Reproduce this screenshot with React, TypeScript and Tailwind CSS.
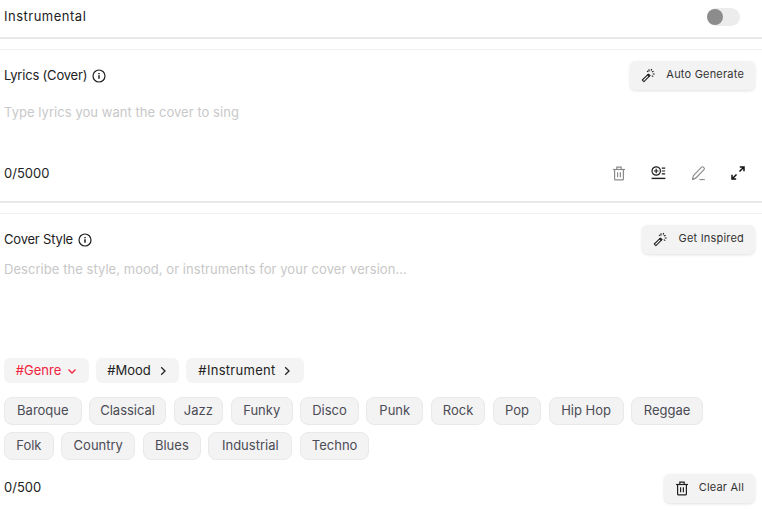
const font = { fontFamily: '"Inter", "Noto Sans", sans-serif' }

const InfoIcon = () => (
  <svg width="14" height="14" viewBox="0 0 14 14" fill="none" stroke="#1f1f1f">
    <circle cx="7" cy="7" r="6" strokeWidth="1.2" />
    <path d="M7 6.3v3.4" strokeWidth="1.5" />
    <path d="M7 4v1.3" strokeWidth="1.5" />
  </svg>
)

const WandIcon = () => (
  <svg width="15" height="15" viewBox="0 0 15 15" fill="none">
    <path d="M1.3 12 7.4 6.1l1.5 1.5-6 6z" fill="#fff" stroke="#222" strokeWidth="1.1" strokeLinejoin="round" />
    <path d="M6.4 7.1 7.4 6.1l1.5 1.5-1 1z" fill="#222" stroke="#222" />
    <path d="M8 1.2v2.2M6 3l1.1.7M10.7 1l-.6 1.6M12.6 3.2l-1.7.9M13.7 6h-1.9M12.3 8.6l-1.5-1" stroke="#222" strokeWidth="1.1" />
  </svg>
)

const TrashIcon = ({ color }: { color: string }) => (
  <svg width="14" height="15" viewBox="0 0 14 15" fill="none" stroke={color} strokeWidth="1.2">
    <path d="M1 3.5h12" />
    <path d="M4.8 3.2V1.2h4.4v2" />
    <path d="M2.6 3.5v9.4c0 .5.4.9.9.9h7c.5 0 .9-.4.9-.9V3.5" />
    <path d="M5.6 6.2v5M8.4 6.2v5" />
  </svg>
)

const AddListIcon = () => (
  <svg width="15" height="14" viewBox="0 0 15 14" fill="none" stroke="#1f1f1f" strokeWidth="1.2">
    <circle cx="5.2" cy="5" r="4.2" />
    <path d="M3 5h4.4M5.2 2.8v4.4" />
    <path d="M10.8 2.2h3.4M10.8 5h3.4M10.8 7.8h3.4" />
    <path d="M.6 12.4h13.8" strokeWidth="1.4" />
  </svg>
)

const PenIcon = () => (
  <svg width="15" height="15" viewBox="0 0 15 15" fill="none" stroke="#8a8a8a" strokeWidth="1.1" strokeLinejoin="round">
    <path d="M1.4 13.4 2.4 9.6 10.6 1.2c.6-.5 1.3-.5 1.8 0l.6.7c.5.5.5 1.2 0 1.7L4.9 12z" />
    <path d="M1.4 13.4 4.9 12" />
    <path d="M8.4 13.6h5.4" />
  </svg>
)

const ExpandIcon = () => (
  <svg width="14" height="14" viewBox="0 0 14 14" fill="none" stroke="#111" strokeWidth="1.5">
    <path d="M8.5 5.5 13 1M8.8 1H13v4.2" />
    <path d="M5.5 8.5 1 13M1 8.8V13h4.2" />
  </svg>
)

const Chevron = ({ down }: { down?: boolean }) => (
  <svg width="10" height="10" viewBox="0 0 10 10" fill="none" stroke={down ? '#f0223c' : '#222'} strokeWidth="1.3">
    {down ? <path d="M1.5 3.5 5 7l3.5-3.5" /> : <path d="M3.2 1.3 7 5l-3.8 3.7" />}
  </svg>
)

const ActionButton = ({ icon, label, width }: { icon: React.ReactNode; label: string; width: string }) => (
  <button className={`flex h-[29px] items-center justify-between rounded-md bg-[#f3f3f3] px-[11px] text-[11px] tracking-[0.2px] text-[#333] shadow-[0_1px_3px_rgba(0,0,0,0.12)] ${width}`}>
    {icon}
    <span className="mb-[2px]">{label}</span>
  </button>
)

const Divider = () => (
  <div className="mb-[11px] h-[13px] border-b border-[#f0f0f0] border-t-2 border-t-[#e8e8e8]" />
)

const row1 = [
  { name: 'Baroque', w: 'w-[77.7px]' },
  { name: 'Classical', w: 'w-[76.7px]' },
  { name: 'Jazz', w: 'w-[49.7px]' },
  { name: 'Funky', w: 'w-[61.7px]' },
  { name: 'Disco', w: 'w-[58.7px]' },
  { name: 'Punk', w: 'w-[56.7px]' },
  { name: 'Rock', w: 'w-[54.7px]' },
  { name: 'Pop', w: 'w-[48px]' },
  { name: 'Hip Hop', w: 'w-[75px]' },
  { name: 'Reggae', w: 'w-[71.7px]' },
]

const row2 = [
  { name: 'Folk', w: 'w-[49.7px]' },
  { name: 'Country', w: 'w-[74px]' },
  { name: 'Blues', w: 'w-[58px]' },
  { name: 'Industrial', w: 'w-[83.7px]' },
  { name: 'Techno', w: 'w-[69.7px]' },
]

const Chip = ({ name, w }: { name: string; w: string }) => (
  <div className={`flex h-[28px] items-center justify-center rounded-lg border border-[#e9e9e9] bg-[#f3f3f3] text-[13px] text-[#4b4b55] ${w}`}>
    {name}
  </div>
)

export default function App() {
  return (
    <div style={font} className="h-[510px] w-[762px] overflow-hidden bg-white text-[13px] text-[#222]">
      <div className="flex h-[37px] items-center justify-between pb-[4px] pl-1 pr-[22px]">
        <span className="tracking-[0.5px]">Instrumental</span>
        <div className="flex h-[18px] w-[33px] items-center rounded-full bg-[#ececec]">
          <div className="h-4 w-4 rounded-full bg-[#8c8c8c]" />
        </div>
      </div>
      <Divider />

      <div className="flex items-center justify-between pl-1 pr-[7px]">
        <div className="flex items-center gap-[5px]">
          <span className="tracking-[-0.2px]">Lyrics (Cover)</span>
          <InfoIcon />
        </div>
        <ActionButton icon={<WandIcon />} label="Auto Generate" width="w-[125px]" />
      </div>
      <div className="mt-[13px] h-[61px] pl-1 tracking-[0.05px] text-[#c8c8c8]">Type lyrics you want the cover to sing</div>
      <div className="flex h-[18px] items-center justify-between pl-1 pr-[17px]">
        <span className="mt-[2px]">0/5000</span>
        <div className="flex items-center gap-[25px]">
          <TrashIcon color="#8a8a8a" />
          <AddListIcon />
          <PenIcon />
          <ExpandIcon />
        </div>
      </div>
      <div className="h-[19px]" />
      <Divider />

      <div className="flex items-center justify-between pl-1 pr-[7px]">
        <div className="flex items-center gap-[5px]">
          <span className="tracking-[-0.2px]">Cover Style</span>
          <InfoIcon />
        </div>
        <ActionButton icon={<WandIcon />} label="Get Inspired" width="w-[113px]" />
      </div>
      <div className="mt-[6px] h-[98px] pl-1 tracking-[0.05px] text-[#c8c8c8]">Describe the style, mood, or instruments for your cover version...</div>

      <div className="flex gap-[7px] pl-1">
        <div className="flex h-[25px] w-[85px] items-center justify-center gap-[6px] rounded-md bg-[#f4f4f4] text-[#f0223c]">
          #Genre <Chevron down />
        </div>
        <div className="flex h-[25px] w-[83px] items-center justify-center gap-[7px] rounded-md bg-[#f4f4f4]">
          #Mood <Chevron />
        </div>
        <div className="flex h-[25px] w-[118px] items-center justify-center gap-[6px] rounded-md bg-[#f4f4f4] tracking-[0.3px]">
          #Instrument <Chevron />
        </div>
      </div>

      <div className="mt-[14px] flex gap-[7.6px] pl-1">
        {row1.map((c) => <Chip key={c.name} name={c.name} w={c.w} />)}
      </div>
      <div className="mt-[7px] flex gap-[7.6px] pl-1">
        {row2.map((c) => <Chip key={c.name} name={c.name} w={c.w} />)}
      </div>

      <div className="mt-[14px] flex items-center justify-between pl-1 pr-[7px]">
        <span className="mb-[2px]">0/500</span>
        <ActionButton icon={<TrashIcon color="#222" />} label="Clear All" width="w-[91px]" />
      </div>
    </div>
  )
}
